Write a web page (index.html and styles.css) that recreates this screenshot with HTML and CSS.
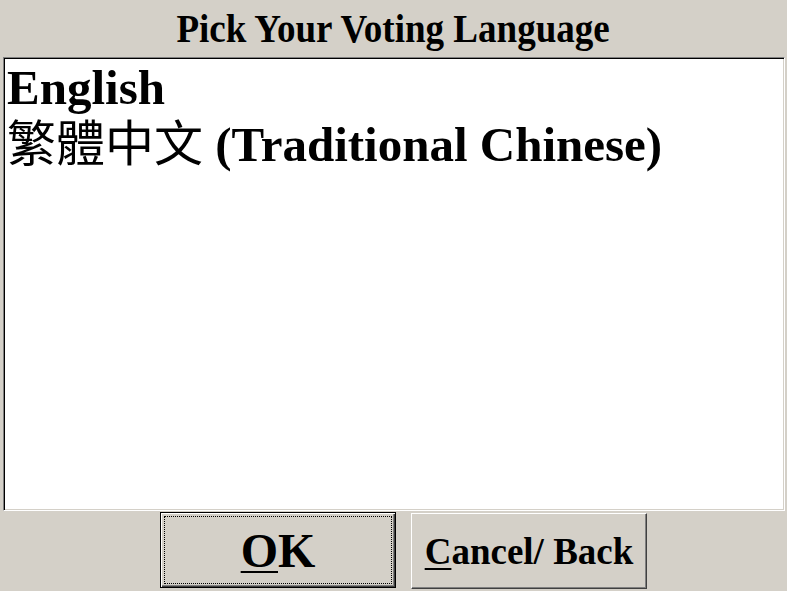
FILE: index.html
```html
<!DOCTYPE html>
<html lang="en">
<head>
  <meta charset="UTF-8">
  <title>Pick Your Voting Language</title>
  <link rel="stylesheet" href="styles.css">
</head>
<body>
  <!-- Title -->
  <div class="title-bar">
    <h1><span class="title-text">Pick Your Voting Language</span></h1>
  </div>

  <!-- Language list -->
  <div class="list-box">
    <div class="list-item selected">English</div>
    <div class="list-item"><span class="cjk">繁體中文</span> (Traditional Chinese)</div>
  </div>

  <!-- Buttons -->
  <div class="button-row">
    <button class="btn btn-default" type="button"><u>O</u>K</button>
    <button class="btn btn-cancel" type="button"><u>C</u>ancel/ Back</button>
  </div>
</body>
</html>
```

FILE: styles.css
```css
body {
  margin: 0;
  width: 787px;
  height: 591px;
  overflow: hidden;
  background-color: #d4d0c8;
  font-family: "Liberation Serif", "Times New Roman", serif;
  display: flex;
  flex-direction: column;
}

.title-bar {
  height: 57px;
  display: flex;
  justify-content: center;
}

h1 {
  margin: 0;
  font-size: 39px;
  line-height: 57px;
  font-weight: bold;
  color: #000;
}

.title-text {
  display: inline-block;
  transform: scaleX(0.95);
}

/* sunken list box */
.list-box {
  margin: 0 2px 0 3px;
  height: 450px;
  background-color: #fff;
  border: 1px solid;
  border-color: #808080 #fff #fff #808080;
  box-shadow: inset 1px 1px 0 #000, inset -1px -1px 0 #d4d0c8;
  padding: 1px 1px 1px 3px;
}

.list-item {
  height: 57px;
  font-size: 49px;
  line-height: 57px;
  font-weight: bold;
  color: #000;
  white-space: nowrap;
}

.cjk {
  font-family: "Noto Sans CJK TC", sans-serif;
  font-weight: normal;
  line-height: 40px;
}

.button-row {
  flex: 1;
  display: flex;
  justify-content: center;
  align-items: flex-start;
  gap: 15px;
  padding: 1px 0 0 20px;
}

.btn {
  width: 236px;
  height: 76px;
  margin: 0;
  padding: 0;
  background-color: #d4d0c8;
  font-family: "Liberation Serif", "Times New Roman", serif;
  font-weight: bold;
  color: #000;
  display: flex;
  align-items: center;
  justify-content: center;
}

.btn u {
  text-decoration-thickness: 2px;
  text-underline-offset: 4px;
}

.btn-default {
  font-size: 48px;
  border: 1px solid #000;
  box-shadow: inset 1px 1px 0 #fff, inset -1px -1px 0 #404040, inset -2px -2px 0 #808080;
  outline: 1px dotted #000;
  outline-offset: -5px;
}

.btn-cancel {
  margin-top: 1px;
  font-size: 37px;
  border: 1px solid;
  border-color: #fff #404040 #404040 #fff;
  box-shadow: inset -1px -1px 0 #808080;
}
```
